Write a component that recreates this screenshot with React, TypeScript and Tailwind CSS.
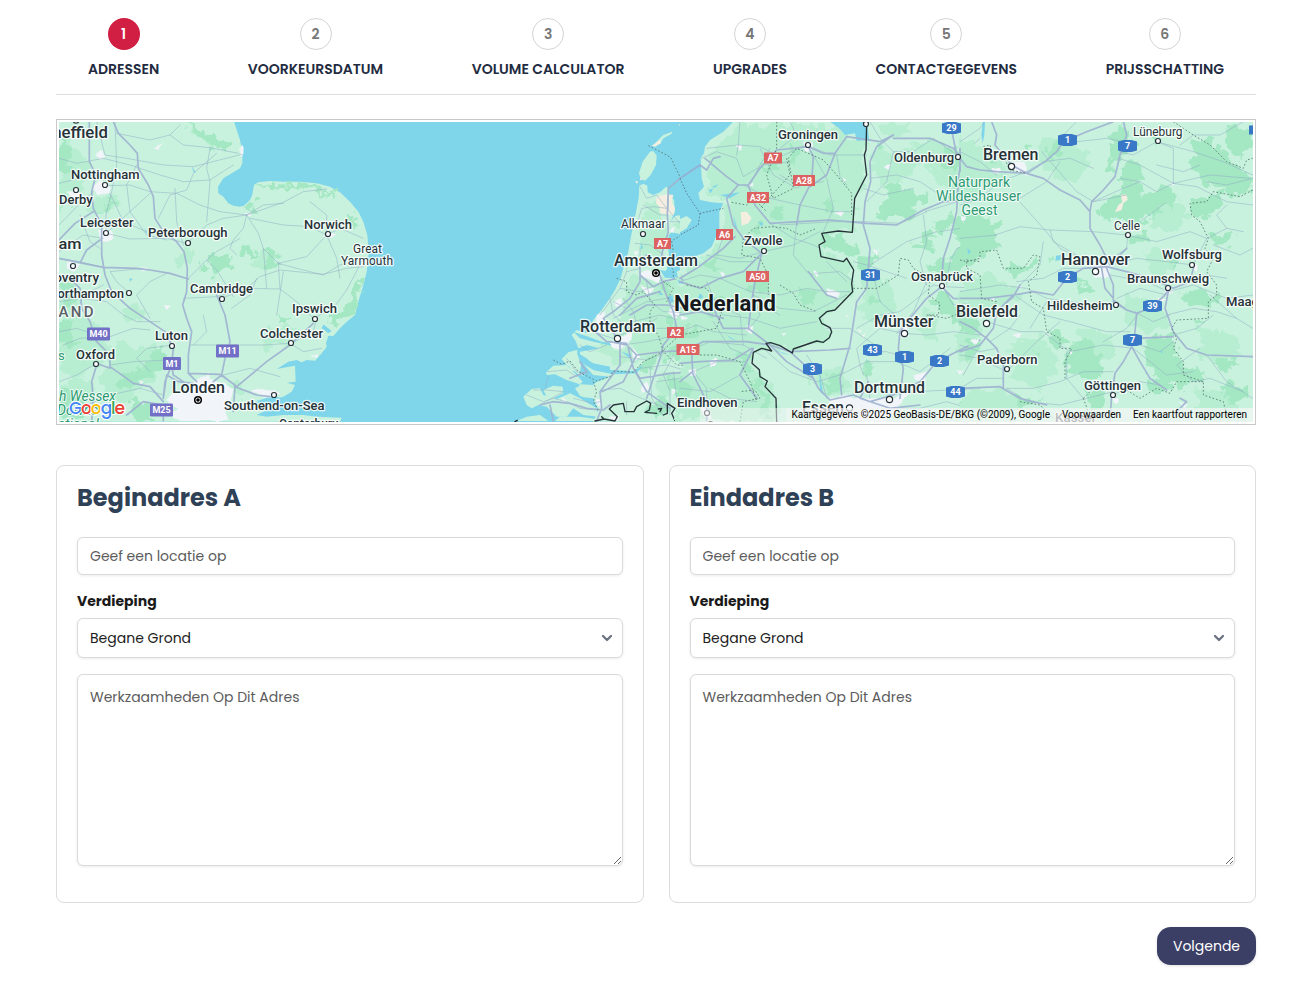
import React from "react";
import { ChevronDown } from "lucide-react";

const steps = [
  "Adressen",
  "Voorkeursdatum",
  "Volume calculator",
  "Upgrades",
  "Contactgegevens",
  "Prijsschatting",
];

function Steps() {
  return (
    <ol className="flex h-[95px] justify-between border-b border-[#dedede] px-8 pt-[18px]">
      {steps.map((label, i) => (
        <li key={label} className="flex flex-col items-center">
          <span
            className={
              i === 0
                ? "flex size-8 items-center justify-center rounded-full bg-[#d11e43] text-sm font-semibold text-white"
                : "flex size-8 items-center justify-center rounded-full border border-[#d5d5d5] text-sm font-semibold text-[#777]"
            }
          >
            {i + 1}
          </span>
          <span className="mt-2 text-sm leading-[22px] font-semibold whitespace-nowrap text-[#222b40] uppercase">{label}</span>
        </li>
      ))}
    </ol>
  );
}

// Map geometry is stored per tile; every tile uses thirds of a pixel.
type Tile = {
  x: number;
  mid: string[];
  forest: string[];
  urban: string[];
  sand: string[];
  water: string[];
  minor: string[];
  major: string[];
  dashed: string[];
  border: string[];
};

const england: Tile = {
  x: 50,
  mid: [
    "M27 60L60 70 75 100 110 130 118 170 105 205 80 250 27 290z",
    "M100 270L130 250 150 255 200 245 215 270 180 290 120 290z",
    "M27 490L60 500 90 540 80 590 120 610 160 640 180 700 130 760 60 800 27 760z",
    "M170 700L215 680 260 700 300 690 330 720 320 790 270 830 210 860 150 840z",
    "M400 20L450 50 500 70 530 105 510 100 470 85 430 60z",
    "M620 410L660 405 690 440 650 462 610 450z",
    "M380 420L410 400 430 415 420 445 385 455z",
    "M210 590L260 570 300 590 280 620 230 625z",
    "M30 805L90 790 130 820 110 850 60 860 27 850z",
    "M540 790L580 800 600 840 560 850z",
    "M640 650L700 630 740 645 700 690 650 700z",
  ],
  forest: [
    "M27 70L50 80 65 105 50 140 70 165 60 190 27 185z",
    "M410 22L445 30 480 62 520 75 532 105 512 105 480 80 440 62z",
    "M582 272L602 257 622 265 610 290 585 290z",
    "M618 210L670 203 740 208 800 217 850 237 876 255 840 240 780 228 720 216 640 212z",
    "M640 415L668 402 676 430 690 445 670 462 645 455z",
    "M487 420L515 402 538 410 545 440 520 470 495 480 480 450z",
    "M575 400L600 395 615 415 600 430 575 425z",
    "M875 580L905 550 930 480 940 480 930 530 905 600 870 630 845 635 835 610z",
    "M215 790L260 765 300 740 305 710 335 695 350 720 335 770 300 790 260 805 225 830 195 820z",
    "M27 610L70 620 60 650 80 680 60 700 27 690z",
    "M27 815L55 830 110 860 85 880 110 905 60 918 27 900z",
    "M180 262L210 258 190 278 150 290 160 272z",
    "M27 515L45 508 75 530 85 565 50 570z",
    "M230 850L300 860 310 915 270 918z",
    "M455 440L475 455 480 480 455 470z",
    "M875 292L912 305 922 330 905 345 890 315z",
    "M690 610L720 600 700 630z",
  ],
  urban: [
    "M130 215L150 198 180 210 175 235 145 240z",
    "M147 350L165 338 190 352 185 375 155 378z",
    "M350 850L375 830 410 835 430 800 465 785 475 770 480 795 520 805 550 820 545 850 525 885 535 918 390 918 360 900 385 880 355 870z",
    "M580 295L605 290 598 308z",
    "M310 100L338 78 325 102z",
    "M140 120L160 105 165 128 150 135z",
    "M820 365L845 350 858 358 840 372z",
    "M355 690L375 680 380 698z",
    "M58 440L90 445 70 470 50 460z",
    "M568 100L578 92 577 125 568 120z",
    "M50 230L90 225 90 245 60 250z",
    "M275 455L290 460 280 472z",
    "M340 570L365 572 350 585z",
    "M785 720L805 715 800 730z",
    "M265 795L285 800 275 808z",
    "M640 820L670 828 690 840 660 845 600 832z",
  ],
  sand: [],
  water: [
    "M425 152L438 175 430 170z",
    "M820 628L845 648 835 655 815 640z",
    "M620 858L660 845 690 847 660 860z",
    "M285 340L292 352 288 356z",
    "M238 490L248 492 240 500z",
    "M455 855L500 860 525 850 500 868z",
  ],
  minor: [
    "M140 20L165 120 230 130 340 150 430 155 575 118",
    "M200 55L300 75 360 60 400 90 480 98 565 115",
    "M27 130L80 145 160 130 240 150 330 180 400 200 480 195 550 150",
    "M175 212L240 210 300 230 380 235 450 270 510 290 590 300",
    "M360 60L390 30M500 115L430 175 410 225 360 240 325 310",
    "M170 355L240 372 350 370 410 385 470 330 520 310 590 300",
    "M590 300L700 262 760 230 830 222M590 300L640 270 700 265",
    "M590 300L625 355 640 400 685 445 770 425 830 360",
    "M590 300L580 340 550 375 540 400 560 420M830 360L870 340 940 370",
    "M830 360L780 335 700 330 600 310M830 360L860 430 870 490",
    "M830 360L830 300 780 260M685 445L740 460 820 480 870 450 940 430",
    "M415 490L470 435 500 410 570 370M470 435L500 465 550 545",
    "M515 550L590 520 630 485 690 465 820 478 890 460 940 455",
    "M590 520L690 522 740 560 790 610M690 522L685 440",
    "M790 610L850 580 890 525 940 430M725 685L790 650 800 610",
    "M400 550L500 545 590 520M300 610L260 540 300 500 350 475",
    "M27 560L90 550 170 560 220 600 260 620 330 620",
    "M27 330L85 270 130 230M168 355L240 290 300 235M160 370L100 360 27 410",
    "M27 430L90 440 150 455M240 535L200 500 180 470 280 460",
    "M40 690L90 670 180 665 250 640 300 645M140 745L80 780 27 800",
    "M180 750L250 740 350 735M420 690L520 690 640 690 720 685",
    "M520 780L600 760 690 785M370 690L290 700 260 730 300 770",
    "M110 870L180 840 270 820 340 840M160 510L90 545 27 550",
    "M260 150L230 210 240 290 290 360 350 375M375 220L380 320 400 390",
    "M27 650L80 640 140 660M90 300L120 380 150 400",
    "M480 100L470 160 480 200 470 320M650 520L640 400",
    "M195 20L200 150 185 230 168 300 168 350M430 690L470 650 460 600",
    "M545 580L600 540 620 490M720 685L760 710 815 700",
    "M130 180L27 205M180 235L220 320 290 350M700 470L680 600",
  ],
  major: [
    "M190 20L205 55 240 90 262 115 265 160 295 210 310 245 315 310 340 350 380 380 402 410 412 460 410 530 398 570 410 610 425 650 415 720 415 775 440 800",
    "M118 20L118 140 138 180 125 230 130 280 155 330 155 420 165 480 185 530 240 580 300 620 345 650 370 700 365 750 345 800 340 850",
    "M27 375L75 325 130 290M92 440L110 405 150 375",
    "M27 430L100 445 160 457 260 460 300 465 360 475 415 492",
    "M60 490L90 520 95 580 120 620 140 680 180 720 180 755 230 790 250 805 300 815 340 860",
    "M138 745L180 760M140 750L125 800 130 850 125 918",
    "M500 540L525 600 540 680 525 730 515 780 490 800",
    "M415 775L510 778 555 810 550 890",
    "M515 780L560 815 650 740 720 690 790 625",
    "M340 850L350 780 385 800 430 805M230 900L280 860 340 870 340 918",
    "M365 750L370 780 400 800M555 815L620 840 660 845",
  ],
  dashed: [],
  border: [],
};

const holland: Tile = {
  x: 380,
  mid: [
    "M795 260L840 248 862 240 862 270 850 330 855 420 790 440 785 330z",
    "M750 490L800 490 850 490 940 520 960 720 870 720 800 740 700 650 730 570z",
    "M730 590L800 600 830 640 780 700 730 660z",
    "M655 690L720 700 800 710 780 740 700 745z",
    "M830 780L960 760 960 850 890 830 840 860z",
    "M920 460L960 440 960 480 905 485z",
    "M880 320L925 315 920 325 895 345z",
  ],
  forest: [
    "M768 400L760 440 740 470 752 420z",
    "M790 740L815 715 830 745 820 770 780 770z",
    "M865 785L905 800 940 820 900 850 865 820z",
    "M870 600L895 610 890 640 870 650z",
    "M840 520L865 500 875 530 860 560z",
    "M870 690L910 720 890 745 860 735z",
    "M905 330L925 318 928 325 915 345 895 345z",
    "M800 870L850 840 870 870 850 905 800 900z",
  ],
  urban: [
    "M775 480L800 465 845 480 835 505 800 490z",
    "M700 560L722 550 730 570 712 578z",
    "M650 600L670 590 680 620 665 650 645 650z",
    "M690 680L730 665 750 640 755 670 725 700 700 700z",
    "M860 590L885 570 900 600 885 610z",
    "M925 765L950 760 948 785 930 783z",
    "M783 805L800 800 805 825 785 830z",
    "M650 850L665 850 662 875 655 870z",
    "M780 510L820 520 800 540z",
    "M755 700L775 710 785 725 760 740z",
    "M865 345L880 335 882 352z",
    "M870 820L888 825 880 840z",
    "M690 905L715 900 712 918 695 918z",
    "M765 410L775 405 772 430z",
    "M545 850L560 858 550 866z",
  ],
  sand: [
    "M830 245L860 238 880 240 875 260 885 280 880 300 840 295 838 275 828 265z",
    "M815 92L840 75 842 85 825 95z",
    "M895 30L915 20 920 25 905 33z",
    "M765 197L775 200 770 206z",
    "M780 190L787 193 780 196z",
  ],
  water: [
    "M580 650L625 665 665 680 700 685 695 692 640 680 600 670z",
    "M590 712L620 730 640 750 690 765 760 768 790 750 770 775 700 778 640 765 600 740z",
    "M604 740L640 780 690 785 640 805 600 775z",
    "M535 790L600 812 585 820 600 842 640 860 600 845 560 820z",
    "M862 545L878 540 880 560 868 568z",
    "M783 385L790 400 782 402z",
    "M840 465L865 470 880 490 855 488z",
    "M895 495L930 500 960 515 930 510 895 505z",
    "M835 525L850 540 840 540z",
    "M725 710L755 720 750 730z",
  ],
  minor: [
    "M780 215L800 250 830 240 860 280 820 275 785 280 770 330",
    "M790 270L840 300 862 300M765 385L810 390 850 420 865 440",
    "M780 400L780 460 740 470M740 470L720 520 690 560 660 600",
    "M700 610L740 590 800 560 860 550 910 570 960 560",
    "M740 580L700 560M760 620L840 600 880 610M720 660L780 640 860 640 940 640",
    "M730 690L800 680 870 665 960 660M650 655L700 670",
    "M720 725L800 735 850 715M665 825L720 820 760 840 860 880",
    "M780 760L860 750 930 770M830 800L900 790 960 800",
    "M560 730L590 770 625 775M500 770L560 765 590 785",
    "M440 840L490 860 520 850 560 860 600 880 650 885",
    "M460 825L500 825 550 830 480 870M600 690L630 710 680 690",
    "M810 760L815 850 850 900M880 770L890 850 960 880",
    "M960 620L880 600 890 560 930 530M720 520L780 530 850 500",
    "M740 860L740 900M880 720L850 780 870 830 870 900",
    "M505 785L495 820M580 850L640 865 660 860",
    "M870 320L920 320M865 240L865 285 900 325",
    "M690 550L700 600 745 640 800 630 830 610",
    "M730 550L760 590 770 630M800 500L810 560 850 590 960 595",
  ],
  major: [
    "M960 145L930 165 865 220 862 300 865 350 850 400 840 440",
    "M800 420L780 450 780 500 750 550 700 590 670 610 690 640 720 680",
    "M780 480L820 515 850 500 890 490 960 500",
    "M840 480L855 530 880 590 890 640 850 690 840 730 810 820 800 850",
    "M690 680L740 690 770 720 850 710 960 705",
    "M720 600L770 550 840 530M750 600L800 570 860 570 960 590",
    "M745 700L760 760 780 790 870 775 960 770",
    "M720 690L720 750 690 790 660 830 665 880 650 918",
    "M480 870L520 860 570 865 620 880 670 885 690 870",
    "M770 720L730 800 665 830M760 760L800 830 870 880",
    "M935 710L938 770 960 820M570 790L620 770 600 740",
    "M510 870L520 918M640 645L680 680 740 685",
  ],
  dashed: [
    "M805 92L850 115 872 127 885 155 900 185 915 235 935 270 960 298",
    "M960 330L930 340 905 360 875 378 880 410 865 445 880 465 880 485",
    "M710 490L740 500 740 530 770 540 790 530 825 570 810 590 810 630 835 660 850 710 890 750 960 752",
    "M520 735L545 748 570 738 595 770 650 798 690 785 700 768 760 772 790 740 840 715 910 650 960 655",
    "M640 800L650 830 640 860 655 885M850 500L880 520 860 560",
  ],
  border: [
    "M645 918L672 912 665 905M672 912L705 918 712 905 688 882 700 870 730 865 735 890 762 890 770 875 800 858 812 865 808 885 795 892 830 895M835 882L845 880 840 890M850 900L862 895 862 865 885 880 875 895 885 918",
    "M405 920L412 916",
  ],
};

const eastern: Tile = {
  x: 680,
  mid: [
    "M180 30L480 30 505 65 530 80 555 80 552 130 560 180 522 265 518 352 425 355 432 385 415 395 425 430 500 432 520 465 517 530 460 590 418 610 455 650 430 680 330 710 265 690 215 715 225 770 285 830 290 918 0 918 0 490 50 450 120 380 140 260 85 235 90 200 80 130z",
    "M590 90L640 110 700 95 720 140 680 190 610 210 570 160z",
    "M700 90L760 80 830 120 900 160 900 220 850 260 790 230z",
    "M560 470L620 490 660 560 600 620 540 590z",
    "M720 590L780 610 770 680 710 660z",
    "M390 770L480 760 520 810 480 850 410 830z",
    "M590 30L680 25 690 55 620 70z",
    "M820 650L900 620 900 710 840 740z",
  ],
  forest: [
    "M620 215L650 195 672 205 665 225 690 215 705 232 745 235 735 270 690 275 720 290 690 320 650 300 610 320 590 290 618 265z",
    "M690 385L730 380 720 345 760 340 770 365 745 385 760 400 720 405z",
    "M760 330L800 305 820 325 790 345z",
    "M840 300L900 300 900 370 870 390 830 370 815 330z",
    "M830 400L900 390 900 430 860 460 820 480 760 470 750 440 800 440z",
    "M780 90L830 95 850 130 820 180 790 150z",
    "M0 650L25 640 50 630 60 650 30 680z",
    "M70 440L110 430 130 460 95 470z",
    "M70 570L120 545 125 570 95 610 70 600z",
    "M210 480L260 470 250 520 205 530z",
    "M360 510L410 530 400 570 350 560z",
    "M570 415L600 435 590 460 540 470 520 445 540 420z",
    "M430 350L500 380 540 390 540 410 470 410 430 400z",
    "M750 545L800 530 820 560 850 590 890 610 870 625 820 610 760 570z",
    "M170 720L210 735 220 780 190 770z",
    "M225 780L240 800 265 850 275 900 250 900z",
    "M0 780L40 820 20 850 0 840z",
    "M430 780L475 780 480 830 445 835z",
    "M550 740L590 735 580 770 550 775z",
    "M330 95L360 110 350 140 320 130z",
    "M280 285L320 280 300 320 265 310z",
    "M210 330L250 330 240 350 210 345z",
    "M420 260L455 250 470 285 435 290z",
    "M240 150L290 150 295 175 260 180z",
    "M590 80L625 90 600 110z",
    "M560 555L590 545 600 565 570 580z",
    "M840 870L900 845 900 880z",
  ],
  urban: [
    "M165 90L188 90 180 108z", "M365 80L395 80 400 100 375 105z",
    "M90 735L115 730 110 750 92 750z", "M200 630L220 635 215 655 200 650z",
    "M25 765L50 760 45 785 30 785z", "M400 465L415 470 408 485z",
    "M460 290L490 285 485 305z", "M580 400L598 405 590 420z",
    "M450 850L500 840 520 850 590 850 640 845 690 830 660 870 620 918 430 918z",
    "M700 780L740 770 735 800 705 795z", "M655 640L680 640 690 665 660 668z",
    "M770 505L800 510 790 530z", "M485 185L500 195 490 200z",
    "M120 470L135 475 125 490z", "M60 880L90 885 95 910 70 905z",
    "M545 660L555 655 552 670z", "M830 115L850 125 840 140z",
    "M440 520L485 535 475 550 445 540z", "M205 205L220 200 218 215z",
    "M305 655L320 655 310 662z", "M240 405L265 410 255 420z",
    "M610 155L635 150 625 165z", "M500 600L507 605 498 606z",
    "M0 600L25 610 5 620z", "M530 640L545 645 540 650z",
    "M830 765L850 770 840 780z",
  ],
  sand: ["M182 292L200 290 215 310 205 325 185 332z", "M0 22L15 22 5 32z"],
  water: [
    "M450 20L560 20 568 75 530 78 525 55 495 60 480 42z",
    "M0 20L160 20 130 50 90 75 75 95 72 115 62 130 65 190 72 215 55 235 60 255 95 262 130 265 118 290 118 345 108 365 95 395 70 415 40 425 0 430z",
    "M95 215L115 208 105 218z", "M120 240L180 232 150 250z",
    "M235 320L250 325 245 335z", "M862 400L872 410 864 418z",
    "M60 535L70 545 50 560z", "M85 225L100 220 92 235z",
    "M140 660L180 685 150 670z", "M285 705L330 720 310 716z",
    "M418 770L430 840 420 830z", "M160 300L172 340 165 335z",
  ],
  minor: [
    "M80 100L175 90 240 95 300 125 380 90 450 120 560 120",
    "M65 130L110 110 170 130 190 185 250 150 330 140",
    "M180 20L175 90 170 120M240 100L280 180 350 220 400 190",
    "M330 20L350 60 300 100M470 120L480 185 500 210M400 120L440 190 460 280 430 350",
    "M190 210L270 250 360 270 460 290 520 290",
    "M270 325L340 370 400 390 420 400M350 320L340 420 380 470 400 480",
    "M250 410L340 390 420 350M130 365L110 420 180 430 250 410",
    "M80 420L150 440 220 440M0 500L60 480 120 490 210 530",
    "M210 530L300 540 380 520 440 530 510 530M220 540L300 580 400 590 500 540",
    "M405 475L480 470 520 500M520 440L560 450 620 470 680 490",
    "M300 330L460 320 550 320 660 325 740 290",
    "M570 20L600 70 640 110 620 200 560 260M640 110L700 110 760 70 830 120",
    "M840 125L900 70M570 190L650 180 720 200 780 240 850 260",
    "M550 220L610 240 700 220M735 290L800 270 900 240",
    "M530 640L600 600 660 590 700 560 760 510 790 515",
    "M790 515L900 520M650 655L700 590 740 500M670 655L740 660 820 650 900 660",
    "M560 710L620 710 670 725M670 655L600 640 530 700 540 750 550 780",
    "M440 640L510 640 600 700M380 720L420 780 440 850M250 700L330 770 410 800 480 780",
    "M200 650L240 600 220 540M0 650L50 630 100 650 200 660",
    "M100 620L150 700 200 720M0 720L90 680 190 690 260 730",
    "M40 770L110 740 200 740M90 820L150 850 230 860",
    "M40 770L80 820 80 890M0 820L90 830 180 780",
    "M480 780L560 740 650 740 720 770 810 700",
    "M620 840L710 830 900 820M640 880L720 880 800 860 900 890",
    "M740 510L720 440 740 380 730 300M800 510L810 440 830 400 900 380",
    "M900 560L820 570 790 520M850 780L900 690M570 450L680 380 770 350",
    "M780 350L900 330M190 690L180 600 110 570 80 500",
    "M0 560L80 560 130 600 210 610 300 640 410 620",
    "M300 180L350 210 430 200M270 100L240 150 210 210M130 560L230 560 300 600",
    "M440 440L500 500M580 480L600 560 690 640M570 850L560 780",
  ],
  major: [
    "M0 190L60 150 80 165 100 130 120 125M75 130L140 185 175 210 205 210 240 160 290 105 385 95",
    "M385 95L400 125 395 200 360 270 350 330M385 95L430 115 465 115 500 65 600 80 640 60",
    "M205 210L225 270 270 325 360 320 450 315 560 325 650 330 730 285 790 260 900 255",
    "M465 115L440 180 390 215M175 210L140 250 160 330 190 370 245 415",
    "M0 490L50 460 130 400 165 365M245 415L190 470 120 490 60 520 0 500",
    "M245 415L225 500 215 560 205 640 270 690",
    "M640 60L590 95 570 140 572 200 555 260 550 330 570 400 560 520 530 560 510 690 480 790 485 840",
    "M640 70L750 70 820 100 845 130 835 190 830 290 810 370 790 430 785 500",
    "M0 710L70 680 200 680 270 690 330 710 385 760 415 820 450 855",
    "M0 745L60 740 160 735 215 700M38 770L35 710M38 770L0 800M38 775L80 860 80 918",
    "M785 515L740 550 690 610 660 650 655 700 670 760 660 850",
    "M785 515L820 550 900 555M450 855L520 840 570 860 640 840 720 800 770 740 830 710 900 675",
    "M220 700L180 780 230 850M330 710L450 705 510 700",
    "M100 580L130 640 205 640M0 600L60 590 130 610M565 800L540 850 630 880 720 870",
    "M385 470L440 540 470 550M270 690L320 740 400 790M810 20L830 120 870 160 900 160",
  ],
  dashed: [
    "M155 262L200 270 220 250 260 290",
    "M290 20L290 100 260 180 280 250 340 220 325 130 350 100 430 135 470 180 515 235 515 300",
    "M190 370L220 340 275 335 320 340 360 360 410 340M190 370L185 420 240 430 265 480 265 540",
    "M300 510L340 535 360 570 410 590M520 520L590 520 655 480 660 430 685 435 700 460 750 490 745 540 780 565 775 600 740 600",
    "M740 600L800 610 850 590 900 580M180 920L190 860 240 850 225 825 180 830M60 720L110 720 180 740 210 800 230 860",
    "M860 435L900 440M320 130L330 180 240 280M20 510L80 520 125 590 110 640 0 660",
  ],
  border: [
    "M560 28L558 105 553 120 560 180 524 250 517 352 475 348 425 355 435 380 417 390 423 425 490 440 500 430 521 465 515 505 518 530 465 585 440 590 418 610 425 625 450 638 455 650 448 668 430 682 410 678 340 702 337 714 300 692 272 683 258 685 275 708 245 700 220 712 216 745 238 764 240 785 262 798 255 815 288 850 290 920",
  ],
};

const germany: Tile = {
  x: 960,
  mid: [
    "M0 60L60 90 100 130 150 190 90 210 0 180z",
    "M250 60L330 90 390 130 360 200 280 190 230 130z",
    "M590 250L680 270 690 310 630 350 570 340z",
    "M500 530L600 560 630 630 560 660 490 610z",
    "M150 680L250 670 300 740 240 830 160 790z",
    "M0 830L120 820 200 870 130 910 0 905z",
    "M700 640L820 650 850 720 740 740z",
    "M550 410L620 400 640 460 580 500z",
    "M350 640L450 660 470 720 380 740z",
    "M700 820L800 830 860 918 720 918z",
    "M0 480L100 480 180 540 100 600 0 570z",
  ],
  forest: [
    "M0 310L80 300 115 340 105 370 130 400 100 405 60 410 0 435z",
    "M270 90L300 75 300 110 285 140 268 120z",
    "M440 65L500 40 525 95 475 120 465 180 435 170 455 120z",
    "M480 150L540 140 560 190 530 200 545 240 590 225 610 200 650 230 640 270 600 280 590 310 560 300 550 340 520 320 460 310 420 315 415 275 450 255 480 230z",
    "M700 80L760 70 770 110 820 130 860 170 878 190 878 220 850 240 780 230 720 200 690 150z",
    "M800 30L878 40 878 100 840 130 800 90z",
    "M690 260L780 235 790 260 720 320 690 295z",
    "M670 530L730 520 775 545 750 590 680 575z",
    "M325 700L385 670 410 700 420 740 440 760 385 790 350 780 315 790z",
    "M540 675L640 660 660 700 640 730 670 740 730 770 730 795 680 800 660 830 640 800 590 810 580 760 560 760z",
    "M265 650L300 640 315 690 280 700z",
    "M380 830L440 830 430 880 380 890z",
    "M750 360L790 350 830 360 800 400 755 390z",
    "M560 790L600 800 640 820 600 840 570 830z",
    "M150 450L190 460 230 430 225 450 180 480 140 465z",
    "M0 610L40 605 60 640 40 650 0 640z",
    "M20 680L60 670 50 730 20 740z",
    "M510 370L530 350 570 370 540 390z",
    "M750 740L800 725 850 750 800 770z",
    "M225 715L245 705 240 735z",
    "M80 110L120 140 90 160z",
    "M350 510L390 500 400 530 360 540z",
    "M160 840L240 850 200 880z",
    "M770 800L860 810 870 850 810 860z",
    "M575 55L600 70 585 90z", "M360 480L375 500 355 505z", "M700 610L740 620 715 640z",
    "M190 80L220 95 200 110z", "M270 420L285 440 265 440z", "M630 430L660 445 640 460z",
  ],
  urban: [
    "M95 160L120 155 125 175 98 175z", "M155 140L190 140 205 180 160 165z",
    "M390 455L420 445 450 455 445 490 400 485z", "M30 675L55 670 45 690z",
    "M610 520L640 525 625 545z", "M160 660L190 655 175 670z",
    "M595 545L620 550 600 560z", "M90 545L105 545 100 560z",
    "M325 710L340 708 332 720z", "M0 300L20 310 10 320z",
    "M690 455L715 445 710 470z", "M630 205L645 205 637 212z",
    "M170 510L185 515 175 520z", "M455 850L475 845 470 870z",
    "M660 860L680 870 670 880z",
  ],
  sand: ["M482 240L500 238 503 255 490 265 485 285 465 292 475 270 487 262z"],
  water: [
    "M68 20L75 20 73 60 68 85 64 60z", "M288 422L303 420 302 435 286 437z",
    "M22 400L33 410 24 418z", "M430 460L445 465 440 480z", "M602 706L609 710 604 716z",
  ],
  minor: [
    "M0 80L60 40 70 25M110 180L60 140 0 110M200 170L250 140 330 130 400 160",
    "M0 270L60 250 120 200 200 170M170 250L250 340 300 400 400 450",
    "M245 110L350 230 400 260 500 240M350 80L440 70 490 80",
    "M475 130L540 150 640 205 750 180 870 190M590 80L640 100 640 205",
    "M590 80L520 120 480 110M590 80L700 110 790 140 878 180",
    "M640 205L590 230 540 200 480 190M640 205L710 215 800 260 878 270",
    "M105 360L180 335 270 345 400 350 500 360M270 345L280 380 350 420",
    "M500 360L540 320 615 265M500 360L590 380 690 350 740 370",
    "M410 460L500 400 503 360M450 450L530 430 620 440 700 450",
    "M700 450L740 370 800 340 850 350M760 390L840 420 878 400",
    "M0 370L110 360M170 500L250 490 310 460 390 460",
    "M0 530L120 510 200 520 260 550 400 570 460 570",
    "M180 510L240 450 250 380M450 480L560 500 625 530M625 530L700 510 800 550 878 540",
    "M470 550L540 520 620 540M525 590L580 620 630 600",
    "M170 545L250 600 330 620 440 650 510 650",
    "M80 620L180 650 250 650 300 690 330 710 430 690 520 700",
    "M140 770L200 710 230 680 300 620M140 770L60 730 0 720",
    "M140 820L200 860 300 870 380 850 460 830",
    "M320 710L320 790 370 850M460 840L540 800 600 810",
    "M460 770L370 770 300 800 220 820 140 820",
    "M640 680L600 710 540 690M720 700L650 750 700 800 750 790 850 830",
    "M620 600L700 580 770 590 830 610M660 500L740 480 800 490",
    "M750 540L830 610 878 640M800 340L770 300 800 270",
    "M850 20L780 60 700 60 660 90M878 190L800 210 740 200",
    "M640 660L710 640 760 600M740 720L800 800 878 850",
    "M90 680L150 640 180 600M0 820L50 790 130 790M210 640L260 560",
    "M300 140L260 200 180 250 110 240M350 20L310 60M590 150L670 170 720 150",
    "M540 200L490 220 400 260M540 590L500 640 430 680",
    "M0 690L60 710 110 700M520 700L620 780 700 770",
  ],
  major: [
    "M460 20L380 50 310 80 290 110 255 140 200 175 110 170 60 165 20 155 0 130",
    "M95 20L110 60 105 90 155 150 200 175 250 190 300 225 360 255 390 290 390 340 420 390 450 450",
    "M490 20L500 60 480 120 465 185 430 225 395 260 390 290",
    "M0 550L80 550 160 540 220 530 280 540 320 490 370 460 440 455 500 470 570 490 640 520 690 500 700 460",
    "M440 460L460 510 460 555 500 585 530 595 570 580 610 545 630 520",
    "M530 595L525 650 515 695 490 740 465 775 455 840 450 918",
    "M515 695L540 740 570 790 620 825M0 620L40 640 80 670 110 700 130 750 130 820",
    "M0 710L60 690 100 640 110 590 160 540M0 820L120 815 180 850 260 870",
    "M625 530L615 580 640 650 680 700 740 720 878 725",
    "M425 460L435 520 460 550M450 450L480 420 500 400",
    "M500 585L460 560M530 670L640 665M640 900L680 860 660 850",
    "M180 510L160 545 130 570M0 170L0 100",
  ],
  dashed: [
    "M70 95L90 90 95 110 130 125 150 165 200 175",
    "M640 20L700 60 750 90 800 140 850 160 860 135 878 130",
    "M878 225L840 245 760 230 740 260 690 265 695 300 720 320 745 370 735 400 760 430 740 470 770 510 770 540 745 560 745 610 650 615 635 640 650 670 640 700 670 740 670 780 730 800 730 840 790 860 800 900",
    "M0 435L20 440 60 430 60 410 110 405 130 460 190 460 220 420 240 425 230 480 205 500 215 560 250 580 260 650 300 670 300 700 335 700 315 740 315 790",
    "M20 440L20 460 60 480 65 550 110 560 100 580",
    "M370 850L400 820 460 800 540 850 590 820 630 835 650 800 730 800M370 850L385 890M180 860L240 870 280 910 300 918",
  ],
  border: [],
};

function TileArt({ tile }: { tile: Tile }) {
  return (
    <g transform={`translate(${tile.x} 115) scale(.33333)`} strokeLinejoin="round" strokeLinecap="round">
      <g filter="url(#ragged)">
        <path d={tile.mid.join("")} fill="#b7eed1" />
        <path d={tile.forest.join("")} fill="#a3e7c3" />
      </g>
      <path d={tile.sand.join("")} fill="#f3eedf" />
      <path d={tile.water.join("")} fill="#7fd6ea" />
      <path d={tile.urban.join("")} fill="#f1f4f8" filter="url(#rough)" />
      <g fill="none">
        <path d={tile.minor.join("")} stroke="#8fa9c4" strokeOpacity=".62" strokeWidth="2.4" />
        <path d={tile.major.join("")} stroke="#9fb3d1" strokeWidth="5" strokeOpacity=".95" />
        <path d={tile.dashed.join("")} stroke="#587a72" strokeWidth="2.6" strokeDasharray="5 6" strokeLinecap="butt" />
        <path d={tile.border.join("")} stroke="#263238" strokeWidth="4" />
      </g>
    </g>
  );
}

// text, left, width, baseline, font size, marker x, marker y
type City = [string, number, number, number, number, number?, number?];
const cities: City[] = [
  ["Sheffield", 42, 66, 138.5, 16, 76, 120],
  ["Nottingham", 71, 68.5, 179.5, 13.5, 105, 185],
  ["Derby", 59, 33.5, 204.5, 13.5, 76, 190],
  ["Leicester", 80, 53.5, 227, 13.5, 106, 233],
  ["Peterborough", 148, 79.5, 237, 13.5, 188, 243],
  ["ngham", 31, 50.5, 249.5, 15.5],
  ["Coventry", 45.5, 53.5, 282, 13.5, 73, 266],
  ["Northampton", 48.5, 75.5, 298, 13.5, 129, 293],
  ["Cambridge", 190, 63, 293, 13.5, 222, 299],
  ["Norwich", 304, 48, 229, 13.5, 328, 234],
  ["Ipswich", 292, 45, 313, 13.5, 315, 319],
  ["Colchester", 260, 63, 338, 13.5, 291, 343],
  ["Luton", 155, 33, 340, 13.5, 172, 346],
  ["Oxford", 76, 39, 359, 13.5, 96, 364],
  ["Southend-on-Sea", 224, 100.5, 410, 13.5, 274, 395],
  ["Canterbury", 279, 59, 428, 12.5],
  ["Alkmaar", 621, 44.5, 228.5, 12, 643, 234],
  ["Rotterdam", 580, 75.5, 332, 16, 617.5, 338.5],
  ["Groningen", 778, 60, 139, 13.5, 808, 145],
  ["Zwolle", 744, 38.5, 245, 13.5, 764, 251],
  ["Oldenburg", 894, 60, 162, 13.5, 958, 157],
  ["Osnabrück", 911, 62, 281, 13.5, 942, 286],
  ["Münster", 874, 59.5, 327, 16, 904.5, 333.5],
  ["Dortmund", 854, 71, 393, 16, 889.5, 399.5],
  ["Eindhoven", 677, 60.5, 407, 13.5, 707, 413],
  ["Essen", 802, 42, 413, 16, 849.5, 408],
  ["Bremen", 983, 55.5, 160, 16, 1011.5, 166.5],
  ["Lüneburg", 1133, 49.5, 136, 12, 1158, 141],
  ["Celle", 1114, 26, 230, 12, 1128, 235],
  ["Hannover", 1061, 69, 265, 16, 1095.5, 271.5],
  ["Wolfsburg", 1162, 60, 259, 13.5, 1192, 265],
  ["Braunschweig", 1127, 82, 283, 13.5, 1168, 288],
  ["Hildesheim", 1047, 65.5, 310, 13.5, 1116, 305],
  ["Bielefeld", 956, 62, 317, 16, 986.5, 323.5],
  ["Paderborn", 977, 60.5, 364, 13.5, 1007, 369],
  ["Göttingen", 1084, 57, 390, 13.5, 1113, 395],
  ["Maagdenburg", 1226, 81, 306, 13.5],
  ["Kassel", 1055, 40, 422, 13.5],
  ["Gent", 706, 28, 432, 14],
];

// text, centre x, centre y, half width
const motorways: [string, number, number, number][] = [
  ["M40", 98.5, 334, 11.5], ["M1", 172, 363.5, 9], ["M11", 227.5, 351, 11.5], ["M25", 161.5, 410, 11.5],
];
const dutchRoads: [string, number, number, number][] = [
  ["A7", 662.5, 243.5, 8.5], ["A2", 675.5, 332.5, 8.5], ["A15", 688, 349.5, 11.5], ["A7", 773, 158, 9],
  ["A28", 804, 180.5, 11], ["A32", 758, 197.5, 11], ["A6", 724.5, 234.5, 8.5], ["A50", 757.5, 276.5, 11.5],
];
const autobahns: [string, number, number][] = [
  ["29", 951.5, 128], ["31", 870.5, 275], ["43", 872.5, 350], ["1", 904.5, 357], ["2", 939.5, 361],
  ["3", 812.5, 369], ["44", 955.5, 392], ["1", 1067.5, 140], ["7", 1127.5, 146], ["2", 1067.5, 277],
  ["39", 1152.5, 306], ["7", 1132.5, 340],
];

function Shields() {
  return (
    <g fontSize="9" fontWeight="700" fill="#fff" textAnchor="middle">
      {motorways.map(([t, x, y, w]) => (
        <g key={t + x}>
          <rect x={x - w} y={y - 6.5} width={w * 2} height="13" rx="1.2" fill="#7270c6" />
          <text x={x} y={y + 3.4}>{t}</text>
        </g>
      ))}
      {dutchRoads.map(([t, x, y, w]) => (
        <g key={t + x}>
          <rect x={x - w} y={y - 5.5} width={w * 2} height="11" fill="#dc6262" />
          <text x={x} y={y + 3.2}>{t}</text>
        </g>
      ))}
      {autobahns.map(([t, x, y]) => (
        <g key={t + x}>
          <path d={`M${x - 4} ${y - 6}H${x + 4}L${x + 9.5} ${y - 4.6}V${y + 4.6}L${x + 4} ${y + 6}H${x - 4}L${x - 9.5} ${y + 4.6}V${y - 4.6}z`} fill="#3978c7" />
          <text x={x} y={y + 3.2}>{t}</text>
        </g>
      ))}
      <rect x="1249" y="125.5" width="6" height="9" fill="#3978c7" />
    </g>
  );
}

function MapView() {
  const halo = { paintOrder: "stroke", stroke: "#fff", strokeOpacity: 0.8, strokeWidth: 2.6, strokeLinejoin: "round" } as const;
  return (
    <div className="relative mt-6 h-[306px] border border-[#c9c9c9] p-0.5">
      <svg viewBox="59 122 1194 300" className="block h-[300px] w-full overflow-hidden font-['Roboto',sans-serif]">
        <defs>
          <filter id="ragged" x="-5%" y="-5%" width="110%" height="110%">
            <feTurbulence type="fractalNoise" baseFrequency=".03" numOctaves="3" seed="7" />
            <feDisplacementMap in="SourceGraphic" scale="58" xChannelSelector="R" yChannelSelector="G" />
          </filter>
          <filter id="rough" x="-5%" y="-5%" width="110%" height="110%">
            <feTurbulence type="fractalNoise" baseFrequency=".03" numOctaves="2" seed="3" />
            <feDisplacementMap in="SourceGraphic" scale="15" xChannelSelector="R" yChannelSelector="G" />
          </filter>
          <clipPath id="frame">
            <rect x="59" y="122" width="1194" height="300" />
          </clipPath>
        </defs>
        <rect x="59" y="122" width="1194" height="300" fill="#7fd6ea" />
        <g fill="#c9f2de">
          <path
            transform="translate(50 115) scale(.33333)"
            d="M27 20L552 20 560 45 570 75 577 110 577 145 570 160 545 175 520 190 504 215 505 235 520 245 535 265 550 272 570 275 582 272 600 255 607 240 612 210 625 202 660 198 700 200 750 200 800 205 840 215 870 232 900 260 925 290 940 320 952 360 955 400 955 430 950 470 940 510 925 560 915 600 890 620 870 640 850 663 835 662 828 685 830 695 815 715 795 737 770 735 755 742 740 735 715 740 680 762 735 752 737 800 710 803 735 810 725 830 700 845 680 850 640 855 610 862 650 870 690 872 640 890 620 900 650 905 700 900 760 900 800 905 875 908 870 920 27 920z"
          />
          <g transform="translate(380 115) scale(.33333)">
            <path d="M778 212L790 206 802 212 803 232 820 240 840 232 858 215 866 222 866 240 882 255 885 290 872 320 885 303 905 300 930 305 935 320 920 345 900 357 875 352 866 360 864 390 868 430 860 465 845 475 875 490 900 500 960 520 960 920 640 920 655 885 640 850 600 845 582 820 600 808 640 810 655 795 630 790 600 770 560 765 610 745 640 765 690 775 690 755 640 745 600 722 600 710 660 700 620 690 595 700 588 680 575 660 590 645 620 655 640 615 665 585 690 550 705 525 722 490 733 450 745 410 752 370 760 330 768 290 776 250z" />
            <path d="M810 110L820 108 830 122 828 150 812 180 795 197 782 192 777 175 788 140z" />
            <path d="M825 85L850 60 877 50 875 56 850 70 840 88z" />
            <path d="M545 732L565 712 590 705 600 728 625 745 645 770 630 790 595 778 560 750z" />
            <path d="M498 772L520 752 560 750 585 775 608 800 600 808 560 795 525 778 500 780z" />
            <path d="M490 825L520 812 548 815 550 835 520 850 500 845z" />
            <path d="M430 845L455 822 480 820 490 840 530 852 570 835 600 850 650 880 655 905 610 900 580 880 560 905 530 905 500 875 475 870 455 880 440 870z" />
            <path d="M410 918L440 905 480 900 505 918zM525 918L540 905 600 905 690 918z" />
            <path d="M890 470L920 455 960 430 960 505 930 495 910 485 895 490z" />
            <path d="M953 238L960 235 960 248z" />
          </g>
          <path d="M680 122H1253V422H680z" />
        </g>
        <g clipPath="url(#frame)">
          <TileArt tile={england} />
          <TileArt tile={holland} />
          <TileArt tile={eastern} />
          <TileArt tile={germany} />
        </g>
        <g transform="translate(680 115) scale(.33333)">
          <path d="M0 312L20 303 35 315 20 340 0 352z" fill="#c9f2de" />
          <path d="M0 190L60 150" fill="none" stroke="#8fb4d6" strokeWidth="5" />
          <path d="M0 190L20 235 60 295 130 280M60 295L55 330 0 360" fill="none" stroke="#5f7f96" strokeWidth="3" strokeDasharray="5 5" />
        </g>

        <Shields />

        <g fill="#2b9a72" {...halo} strokeWidth={2}>
          <g fontSize="14" textAnchor="middle">
            <text x="979" y="187" textLength="62" lengthAdjust="spacingAndGlyphs">Naturpark</text>
            <text x="978.5" y="201" textLength="85" lengthAdjust="spacingAndGlyphs">Wildeshauser</text>
            <text x="979.5" y="215" textLength="36" lengthAdjust="spacingAndGlyphs">Geest</text>
          </g>
          <g fontSize="14" fontStyle="italic">
            <text x="59" y="401" textLength="57" lengthAdjust="spacingAndGlyphs">h Wessex</text>
            <text x="57" y="415">Downs</text>
            <text x="48" y="429">National</text>
          </g>
          <text x="58" y="360" fontSize="13">s</text>
        </g>

        <g fill="#263238" {...halo}>
          {cities.map(([name, x, width, y, size]) => (
            <text key={name} x={x} y={y - 0.4} fontSize={size} textLength={width} lengthAdjust="spacingAndGlyphs" fontWeight={size === 12 ? 400 : 500}>
              {name}
            </text>
          ))}
          <text x="172" y="392.5" fontSize="16" fontWeight="500" textLength="53">Londen</text>
          <text x="614" y="265.5" fontSize="16" fontWeight="500" textLength="84">Amsterdam</text>
          <text x="353" y="253.4" fontSize="12" textLength="29">Great</text>
          <text x="341" y="265.4" fontSize="12" textLength="52">Yarmouth</text>
          <text x="58.5" y="317.2" fontSize="15" fontWeight="500" fill="#5a6268" textLength="35">AND</text>
          <text x="674" y="310.5" fontSize="22.5" fontWeight="700" fill="#15191c" textLength="102" lengthAdjust="spacingAndGlyphs">Nederland</text>
        </g>

        <g fill="#fff" stroke="#263238" strokeWidth="1.2">
          {cities.map(([name, , , , size, cx, cy]) =>
            cx === undefined ? null : <circle key={name} cx={cx} cy={cy} r={size >= 16 ? 3.1 : 2.5} />,
          )}
          <circle cx="866" cy="124" r="2.5" />
          <g stroke="#000" strokeWidth="1.5">
            <circle cx="198" cy="400" r="3.3" />
            <circle cx="656" cy="273" r="3.3" />
          </g>
        </g>
        <circle cx="198" cy="400" r="1.8" />
        <circle cx="656" cy="273" r="1.8" />

        <rect x="786" y="408" width="467" height="14" fill="#f5f5f5" fillOpacity=".72" />
        <rect x="700" y="408" width="86" height="14" fill="#f5f5f5" fillOpacity=".5" />
        <g fontSize="10" fill="#000">
          <text x="791.5" y="418" textLength="258.5" lengthAdjust="spacingAndGlyphs">Kaartgegevens ©2025 GeoBasis-DE/BKG (©2009), Google</text>
          <text x="1062" y="418" textLength="59" lengthAdjust="spacingAndGlyphs">Voorwaarden</text>
          <text x="1133" y="418" textLength="114" lengthAdjust="spacingAndGlyphs">Een kaartfout rapporteren</text>
        </g>

        <g
          fontSize="17"
          fontWeight="500"
          paintOrder="stroke"
          stroke="#fff"
          strokeWidth="2"
          strokeLinejoin="round"
          className="font-['Poppins','Lato',sans-serif]"
        >
          <text x="69" y="414" textLength="56">
            <tspan fill="#4285f4">G</tspan>
            <tspan fill="#ea4335">o</tspan>
            <tspan fill="#fbbc04">o</tspan>
            <tspan fill="#4285f4">g</tspan>
            <tspan fill="#34a853">l</tspan>
            <tspan fill="#ea4335">e</tspan>
          </text>
        </g>
      </svg>
    </div>
  );
}

const control =
  "block w-full rounded-md border border-[#d9dadd] bg-white px-3 text-sm outline-none shadow-[0_1px_3px_rgba(0,0,0,0.08)] placeholder:text-[#5c5c5c]";

function AddressCard({ title }: { title: string }) {
  return (
    <section className="h-[438px] flex-1 rounded-lg border border-[#dcdcdc] px-5 pt-3.5">
      <h2 className="text-[24px] leading-9 font-bold text-[#2f4156]">{title}</h2>
      <input className={`${control} mt-[21px] h-[38px]`} placeholder="Geef een locatie op" />
      <label className="mt-4 block text-sm leading-[21px] font-bold text-[#1a1a1a]">Verdieping</label>
      <div className="relative mt-1.5">
        <select className={`${control} h-10 appearance-none text-[#212121]`}>
          <option>Begane Grond</option>
        </select>
        <ChevronDown className="pointer-events-none absolute top-3 right-2 size-4 text-[#6b7280]" strokeWidth={3.4} />
      </div>
      <textarea className={`${control} mt-4 h-48 resize py-3 leading-[21px]`} placeholder="Werkzaamheden Op Dit Adres" />
    </section>
  );
}

export default function App() {
  return (
    <main className="h-[981px] overflow-hidden bg-white pr-[53px] pl-14 font-['Poppins','Inter',sans-serif]">
      <Steps />
      <MapView />
      <div className="mt-10 flex gap-[25px]">
        <AddressCard title="Beginadres A" />
        <AddressCard title="Eindadres B" />
      </div>
      <div className="mt-6 flex justify-end">
        <button className="h-[38px] w-[99px] rounded-[14px] bg-[#3b3e65] text-sm text-white shadow-[0_1px_3px_rgba(0,0,0,0.12)]">Volgende</button>
      </div>
    </main>
  );
}
